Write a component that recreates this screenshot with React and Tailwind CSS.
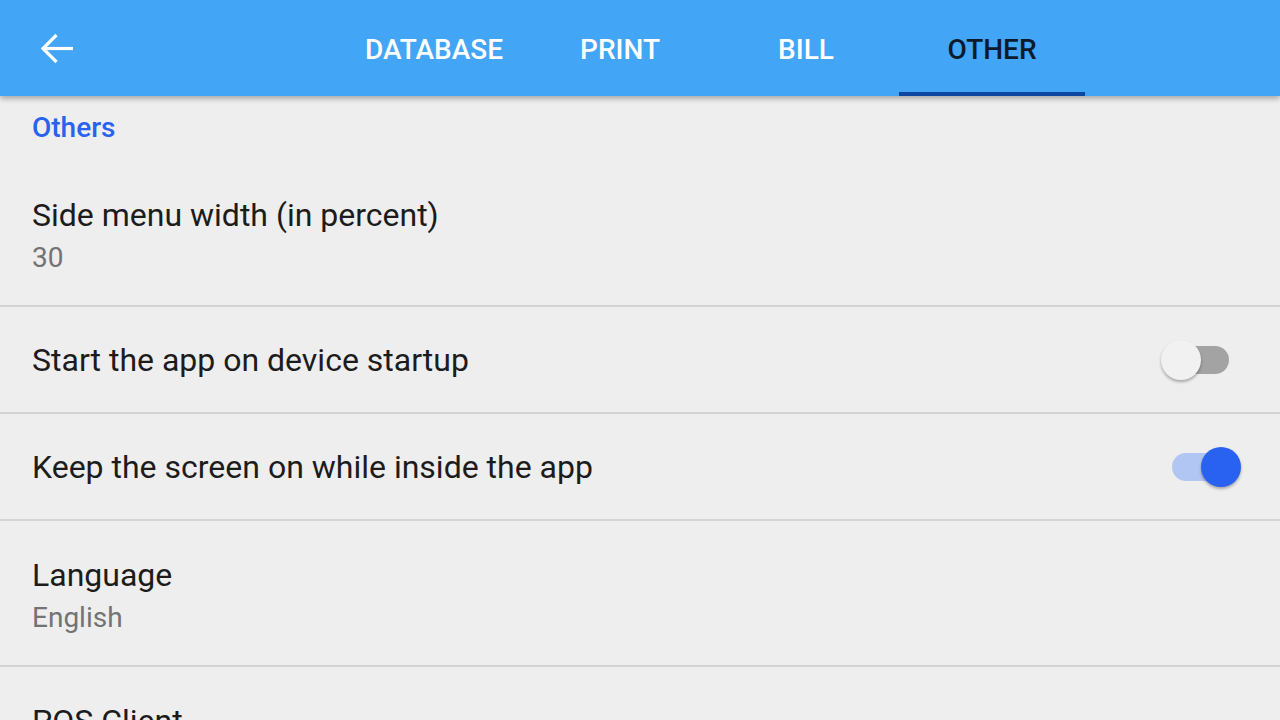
const tabs = ['DATABASE', 'PRINT', 'BILL', 'OTHER'];

function Toggle({ on }) {
  return (
    <div className="relative w-[80px] h-[42px] shrink-0">
      <div
        className={`absolute left-[11px] top-[7px] w-[57px] h-[28px] rounded-full ${on ? 'bg-[#b2c6f3]' : 'bg-[#a3a3a3]'}`}
      ></div>
      <div
        className={`absolute top-[1px] w-[40px] h-[40px] rounded-full shadow-[0_2px_3px_rgba(0,0,0,0.3)] ${on ? 'left-[40px] bg-[#2962f0]' : 'left-0 bg-[#f1f1f1]'}`}
      ></div>
    </div>
  );
}

function Row({ title, value, toggle, height }) {
  return (
    <div className={`flex items-center justify-between pl-8 pr-[39px] border-b-2 border-[#d3d3d3] ${height} ${value ? 'pt-[6px]' : ''}`}>
      <div className="flex flex-col">
        <span className="text-[32px] leading-[40px] text-[#1c1c1c]">{title}</span>
        {value && <span className="text-[28px] leading-[38px] text-[#737373] mt-[4px]">{value}</span>}
      </div>
      {toggle !== undefined && <Toggle on={toggle} />}
    </div>
  );
}

export default function App() {
  return (
    <div className="w-[1280px] h-[720px] overflow-hidden bg-[#eeeeee] font-['Roboto',sans-serif]">
      {/* Toolbar + tabs */}
      <div className="relative z-10 h-[96px] bg-[#42a5f5] flex items-stretch shadow-[0_3px_5px_rgba(0,0,0,0.28)]">
        <div className="w-[341px] flex items-center pl-[40px] pt-[1px]">
          <svg width="33" height="31" viewBox="0 0 33 31" fill="none" stroke="#ffffff" strokeWidth="3.2">
            <path d="M3 15.5H33" />
            <path d="M16.5 2L3 15.5L16.5 29" strokeLinejoin="miter" />
          </svg>
        </div>
        {tabs.map((t) => {
          const active = t === 'OTHER';
          return (
            <div key={t} className="relative w-[186px] flex items-center justify-center pt-[3px]">
              <span className={`text-[28px] font-medium ${active ? 'text-[#0c1a2a]' : 'text-white'}`}>{t}</span>
              {active && <div className="absolute bottom-0 left-0 right-0 h-[4px] bg-[#0d47a1]"></div>}
            </div>
          );
        })}
      </div>

      {/* Settings list */}
      <div className="flex flex-col">
        <div className="h-[64px] pl-8 flex items-center">
          <span className="text-[28px] font-medium text-[#2962f0]">Others</span>
        </div>
        <Row title="Side menu width (in percent)" value="30" height="h-[147px]" />
        <Row title="Start the app on device startup" toggle={false} height="h-[107px]" />
        <Row title="Keep the screen on while inside the app" toggle={true} height="h-[107px]" />
        <Row title="Language" value="English" height="h-[146px]" />
        <Row title="POS Client" value="Disabled" height="h-[146px]" />
      </div>
    </div>
  );
}
